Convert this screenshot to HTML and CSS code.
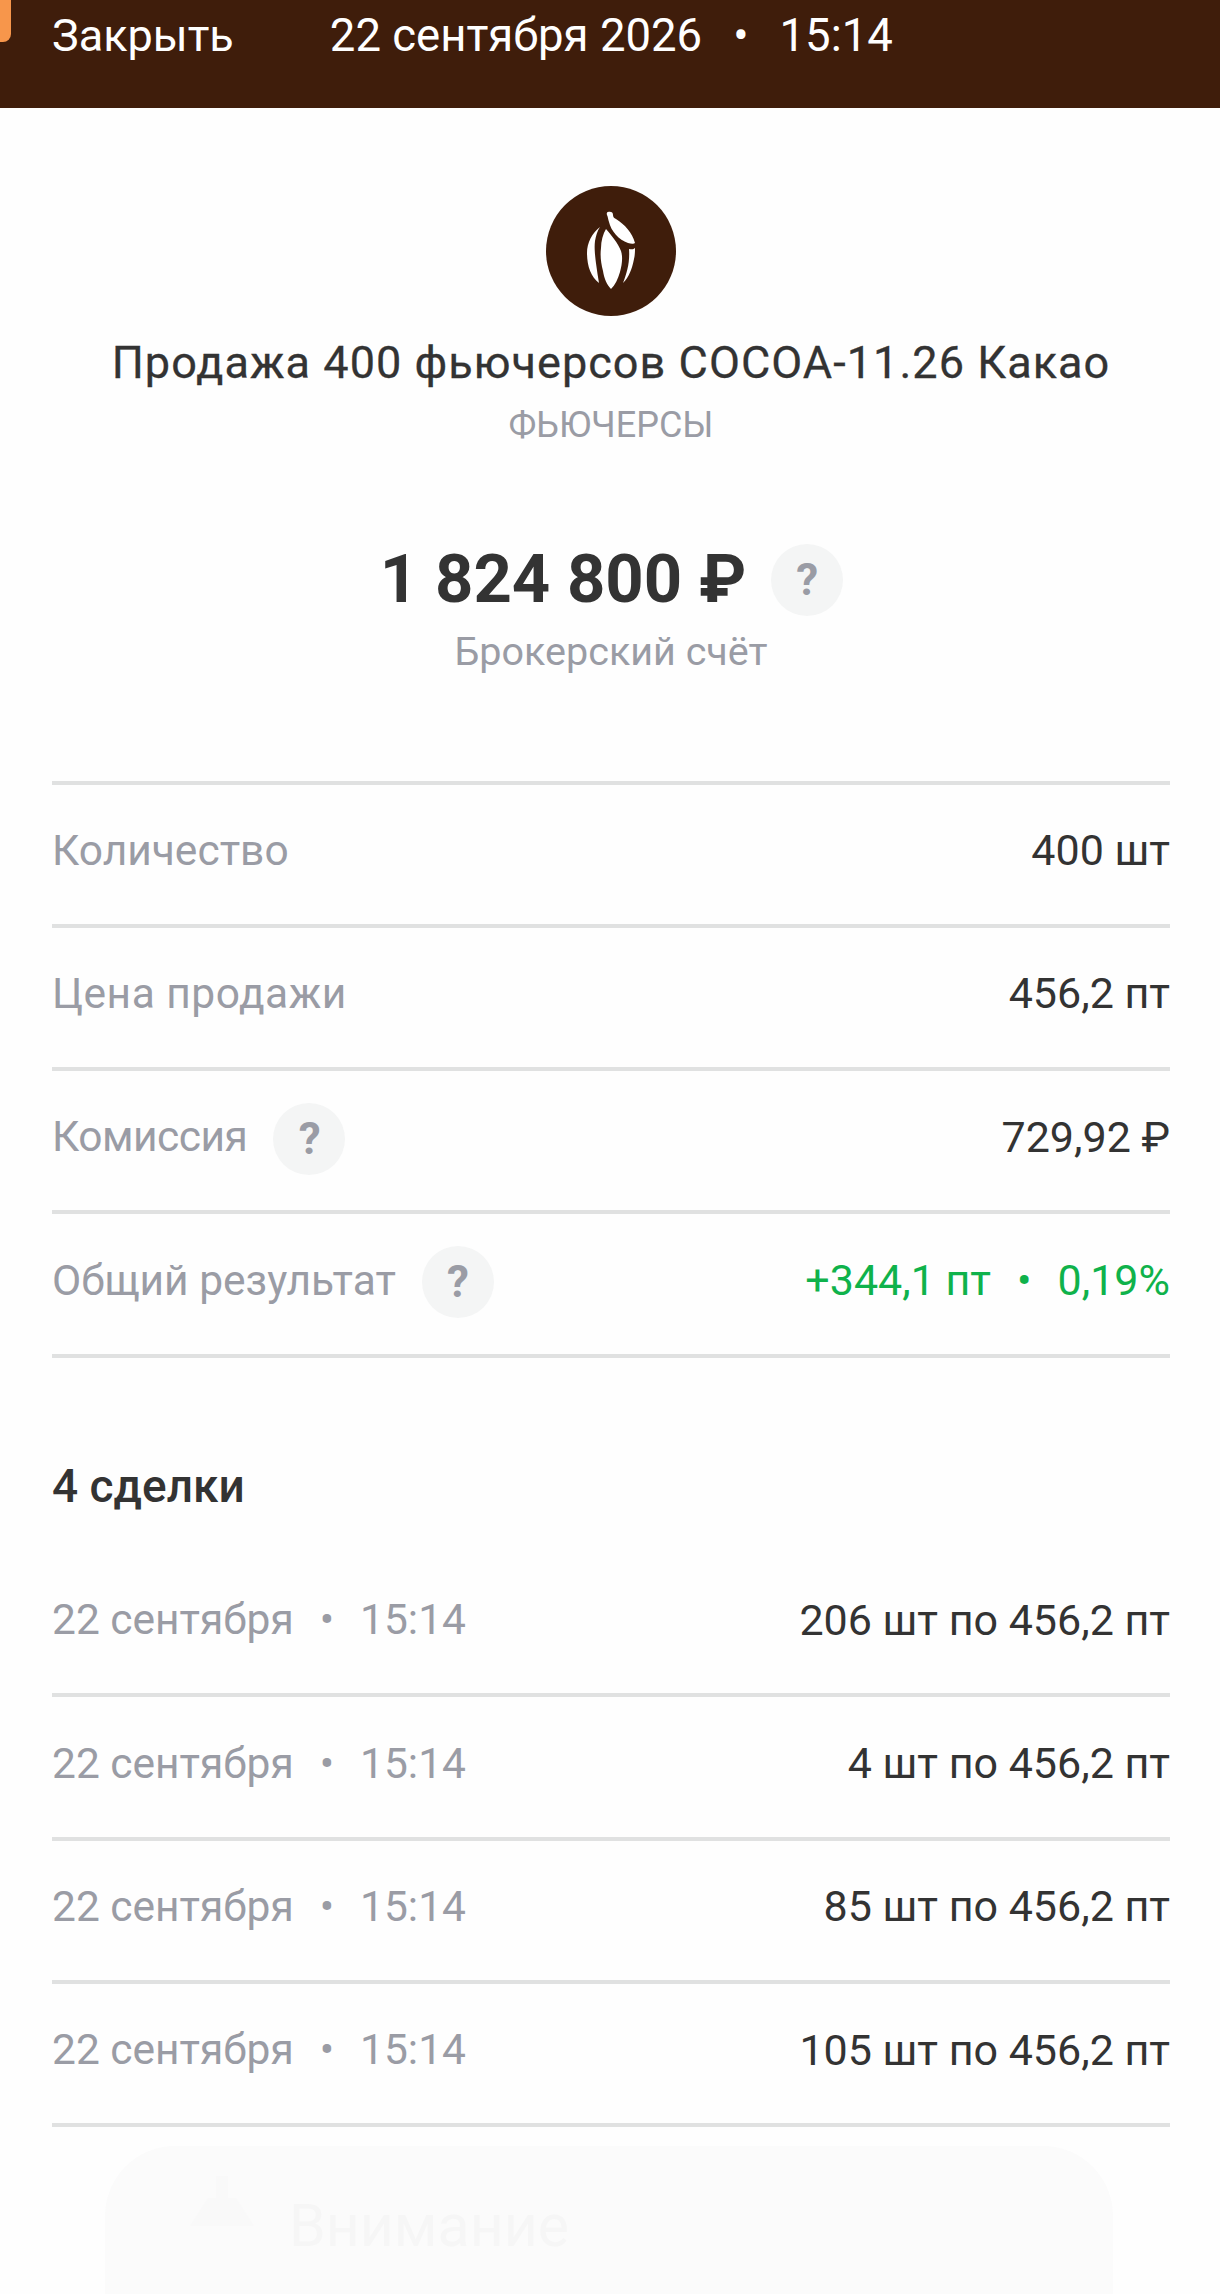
FILE: index.html
```html
<!DOCTYPE html>
<html lang="ru">
<head>
    <meta charset="UTF-8">
    <meta name="viewport" content="width=device-width, initial-scale=1.0">
    <title>Продажа фьючерсов</title>
    <link rel="stylesheet" href="styles.css">
</head>
<body>
    <header class="topbar">
        <span class="notch"></span>
        <span class="close">Закрыть</span>
        <span class="top-date">22 сентября 2026<i class="dot">•</i>15:14</span>
    </header>

    <section class="head">
        <svg class="logo" viewBox="0 0 130 130">
            <circle cx="65" cy="65" r="65" fill="#3f1d0b"/>
            <path fill="#fff" d="M61 29c-1-3 1-4 4-3 1 0 2 1 2 3 0 2 1 3 3 4 9 6 16 13 19 24-1 1-4 1-7 0-9-3-17-12-19-21-1-3-1-5-2-7z"/>
            <path fill="#fff" d="M60 43c5 6 12 14 15 22 2 6 1 14-1 21-2 7-5 13-9 17-4-4-7-11-8-18-2-8-3-15-2-23 0-7 2-14 5-19z"/>
            <path fill="#fff" d="M54 41c-3 4-4 9-5 14-1 8 0 17 4 42-8-6-12-17-12-30 0-10 5-20 13-26z"/>
            <path fill="#fff" d="M83 63c2 0 4 1 6-1 0 3 0 7-1 11-2 10-5 18-11 24 4-10 7-21 6-34z"/>
        </svg>
        <h1 class="title">Продажа 400 фьючерсов COCOA-11.26 Какао</h1>
        <div class="kind">ФЬЮЧЕРСЫ</div>
    </section>

    <section class="total">
        <div class="amount-line">
            <span class="amount">1 824 800 ₽</span>
            <span class="help">?</span>
        </div>
        <div class="account">Брокерский счёт</div>
    </section>

    <section class="rows details">
        <div class="row"><span class="label">Количество</span><span class="value">400 шт</span></div>
        <div class="row"><span class="label wide">Цена продажи</span><span class="value">456,2 пт</span></div>
        <div class="row"><span class="label tight">Комиссия<span class="help">?</span></span><span class="value">729,92 ₽</span></div>
        <div class="row"><span class="label">Общий результат<span class="help">?</span></span><span class="value green">+344,1 пт<i class="dot">•</i>0,19%</span></div>
    </section>

    <h2 class="deals-title">4 сделки</h2>

    <section class="rows deals">
        <div class="row"><span class="label">22 сентября<i class="dot">•</i>15:14</span><span class="value">206 шт по 456,2 пт</span></div>
        <div class="row"><span class="label">22 сентября<i class="dot">•</i>15:14</span><span class="value">4 шт по 456,2 пт</span></div>
        <div class="row"><span class="label">22 сентября<i class="dot">•</i>15:14</span><span class="value">85 шт по 456,2 пт</span></div>
        <div class="row"><span class="label">22 сентября<i class="dot">•</i>15:14</span><span class="value">105 шт по 456,2 пт</span></div>
    </section>

    <section class="notice">
        <svg class="notice-icon" viewBox="0 0 64 50">
            <path fill="#f9f9f9" d="M26 0h12v22h8l18 28H0l18-28h8z"/>
        </svg>
        <span class="notice-title">Внимание</span>
    </section>
</body>
</html>
```

FILE: styles.css
```css
html, body {
    height: 2294px;
    overflow: hidden;
}

body {
    margin: 0;
    background-color: #fefefe;
    color: #333;
    font-family: Roboto, "Noto Sans", sans-serif;
    font-size: 42.5px;
}

.topbar {
    height: 108px;
    box-sizing: border-box;
    padding: 0 52px 38px;
    display: flex;
    align-items: center;
    gap: 96px;
    background-color: #3f1d0b;
    color: #fff;
    font-size: 45px;
    position: relative;
}

.top-date {
    font-size: 45.5px;
}

.notch {
    position: absolute;
    left: 0;
    top: 0;
    width: 11px;
    height: 42px;
    background-color: #f7964b;
    border-radius: 0 0 8px 0;
}

.dot {
    font-style: normal;
    margin: 0 26px;
}

.top-date .dot {
    margin: 0 31px;
}

.head {
    padding: 78px 0 0 2px;
    text-align: center;
}

.logo {
    display: block;
    width: 130px;
    height: 130px;
    margin: 0 auto;
}

.title {
    margin: 22px 0 0;
    font-size: 45px;
    font-weight: 400;
    letter-spacing: 1.05px;
    -webkit-text-stroke: 0.3px #333;
    line-height: 50px;
    color: #333;
}

.kind {
    margin-top: 17px;
    font-size: 36px;
    line-height: 40px;
    color: #9a9ca5;
}

.total {
    margin-top: 94px;
    padding-left: 3px;
    text-align: center;
}

.amount-line {
    display: flex;
    justify-content: center;
    align-items: center;
    gap: 25px;
}

.amount {
    font-size: 67px;
    font-weight: 700;
    line-height: 80px;
    color: #333;
}

.help {
    display: inline-flex;
    justify-content: center;
    align-items: center;
    width: 72px;
    height: 72px;
    border-radius: 50%;
    background-color: #f4f5f5;
    color: #9a9ca5;
    font-size: 44px;
    font-weight: 700;
}

.amount-line .help {
    position: relative;
    top: 1px;
}

.account {
    margin-top: 8px;
    padding-right: 1px;
    line-height: 50px;
    font-size: 39.5px;
    color: #9a9ca5;
}

.rows {
    margin: 0 50px 0 52px;
}

.details {
    margin-top: 103.5px;
    border-top: 4px solid #e0e1e1;
}

.row {
    height: 139.3px;
    display: flex;
    justify-content: space-between;
    align-items: center;
    border-bottom: 4px solid #e0e1e1;
}

.row > span {
    position: relative;
    top: -4px;
}

.label {
    display: flex;
    align-items: center;
    color: #9a9ca5;
}

.label .help {
    margin-left: 26px;
    position: relative;
    top: 2px;
}

.wide {
    letter-spacing: 0.5px;
}

.tight {
    letter-spacing: -0.5px;
}

.value {
    font-size: 43px;
    color: #333;
}

.green {
    color: #0fb24b;
}

.deals-title {
    margin: 103px 52px 0;
    font-size: 46px;
    font-weight: 500;
    line-height: 50px;
    color: #333;
}

.deals {
    margin-top: 43.5px;
}

.notice {
    margin: 19px 107px 0 105px;
    height: 300px;
    padding: 30px 85px;
    display: flex;
    align-items: flex-start;
    gap: 35px;
    background-color: #fbfbfb;
    border-radius: 70px;
}

.notice-icon {
    width: 64px;
    height: 50px;
}

.notice-title {
    margin-top: 20px;
    font-size: 59px;
    line-height: 60px;
    color: #f6f6f6;
}
```
